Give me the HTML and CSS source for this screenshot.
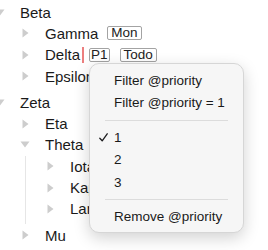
FILE: index.html
```html
<!DOCTYPE html>
<html>
<head>
<meta charset="utf-8">
<link rel="stylesheet" href="styles.css">
</head>
<body>
<div class="tree">
  <div class="node">
    <div class="row"><span class="twisty"><svg width="10" height="7" viewBox="0 0 10 7"><polygon points="0.5,0.5 9.5,0.5 5,6.5" class="tri"/></svg></span><span class="label">Beta</span></div>
    <div class="children">
      <div class="row"><span class="twisty"><svg width="7" height="10" viewBox="0 0 7 10"><polygon points="0.5,0.5 6.5,5 0.5,9.5" class="tri"/></svg></span><span class="label">Gamma</span><span class="tag tag-first">Mon</span></div>
      <div class="row"><span class="twisty"><svg width="7" height="10" viewBox="0 0 7 10"><polygon points="0.5,0.5 6.5,5 0.5,9.5" class="tri"/></svg></span><span class="label">Delta</span><span class="cursor"></span><span class="tag tag-after-cursor tag-narrow">P1</span><span class="tag tag-next">Todo</span></div>
      <div class="row"><span class="twisty"><svg width="7" height="10" viewBox="0 0 7 10"><polygon points="0.5,0.5 6.5,5 0.5,9.5" class="tri"/></svg></span><span class="label">Epsilon</span></div>
    </div>
  </div>
  <div class="node">
    <div class="row"><span class="twisty"><svg width="10" height="7" viewBox="0 0 10 7"><polygon points="0.5,0.5 9.5,0.5 5,6.5" class="tri"/></svg></span><span class="label">Zeta</span></div>
    <div class="children">
      <div class="row"><span class="twisty"><svg width="7" height="10" viewBox="0 0 7 10"><polygon points="0.5,0.5 6.5,5 0.5,9.5" class="tri"/></svg></span><span class="label">Eta</span></div>
      <div class="node">
        <div class="row"><span class="twisty"><svg width="10" height="7" viewBox="0 0 10 7"><polygon points="0.5,0.5 9.5,0.5 5,6.5" class="tri"/></svg></span><span class="label">Theta</span></div>
        <div class="children guide">
          <div class="row"><span class="twisty"><svg width="7" height="10" viewBox="0 0 7 10"><polygon points="0.5,0.5 6.5,5 0.5,9.5" class="tri"/></svg></span><span class="label">Iota</span></div>
          <div class="row"><span class="twisty"><svg width="7" height="10" viewBox="0 0 7 10"><polygon points="0.5,0.5 6.5,5 0.5,9.5" class="tri"/></svg></span><span class="label">Kappa</span></div>
          <div class="row"><span class="twisty"><svg width="7" height="10" viewBox="0 0 7 10"><polygon points="0.5,0.5 6.5,5 0.5,9.5" class="tri"/></svg></span><span class="label">Lambda</span></div>
        </div>
      </div>
      <div class="row"><span class="twisty"><svg width="7" height="10" viewBox="0 0 7 10"><polygon points="0.5,0.5 6.5,5 0.5,9.5" class="tri"/></svg></span><span class="label">Mu</span></div>
    </div>
  </div>
</div>

<div class="menu">
  <div class="item"><span class="check"></span><span>Filter @priority</span></div>
  <div class="item"><span class="check"></span><span>Filter @priority = 1</span></div>
  <div class="sep"></div>
  <div class="item"><span class="check"><svg width="9" height="9" viewBox="0 0 9 9"><path d="M0.8 5.2 L3.2 7.8 L8.2 0.8" fill="none" stroke="#1d1d1f" stroke-width="1.3" stroke-linecap="round" stroke-linejoin="round"/></svg></span><span>1</span></div>
  <div class="item"><span class="check"></span><span>2</span></div>
  <div class="item"><span class="check"></span><span>3</span></div>
  <div class="sep"></div>
  <div class="item"><span class="check"></span><span>Remove @priority</span></div>
</div>
</body>
</html>
```

FILE: styles.css
```css
html, body {
  margin: 0;
  padding: 0;
  background: #ffffff;
  overflow: hidden;
}

body {
  font-family: "Liberation Sans", Arial, sans-serif;
  color: #1a1a1a;
  width: 268px;
  height: 250px;
}

.tree {
  margin-left: -10px;
  padding-top: 1.5px;
}

.row {
  display: flex;
  align-items: center;
  height: 21.3px;
  font-size: 15px;
  white-space: nowrap;
}

.twisty {
  flex: none;
  width: 20px;
  height: 100%;
  display: flex;
  align-items: center;
  justify-content: center;
}

.twisty svg {
  display: block;
}

.tri {
  fill: #cdcdcd;
}

.label {
  margin-left: 10px;
}

.children {
  margin-left: 25px;
  padding-bottom: 5px;
}

.children.guide {
  margin-left: 10px;
  padding-left: 14px;
  border-left: 1px solid #e6e6e6;
}

.tag {
  font-size: 13.5px;
  line-height: 12px;
  padding: 0 3px;
  border: 1px solid #a3a3a3;
  border-radius: 2px;
  color: #222222;
}

.tag-narrow {
  padding: 0 1px;
}

.tag-first {
  margin-left: 9px;
}

.tag-after-cursor {
  margin-left: 5px;
}

.tag-next {
  margin-left: 10px;
}

.cursor {
  width: 2px;
  height: 16px;
  margin-left: 2px;
  background: #ec7f7f;
}

.menu {
  position: absolute;
  left: 89px;
  top: 63px;
  width: 155px;
  box-sizing: border-box;
  padding: 5px 0 4px;
  background: #f6f6f6;
  border: 1px solid #d6d6d6;
  border-radius: 10px;
  box-shadow: 0 5px 16px rgba(0, 0, 0, 0.18);
  font-size: 13.5px;
  color: #1a1a1a;
}

.item {
  display: flex;
  align-items: center;
  height: 22.5px;
  padding-left: 9px;
  white-space: nowrap;
}

.check {
  flex: none;
  width: 15px;
  display: flex;
  align-items: center;
}

.sep {
  height: 1px;
  margin: 5.5px 15px;
  background: #dcdcdc;
}
```
